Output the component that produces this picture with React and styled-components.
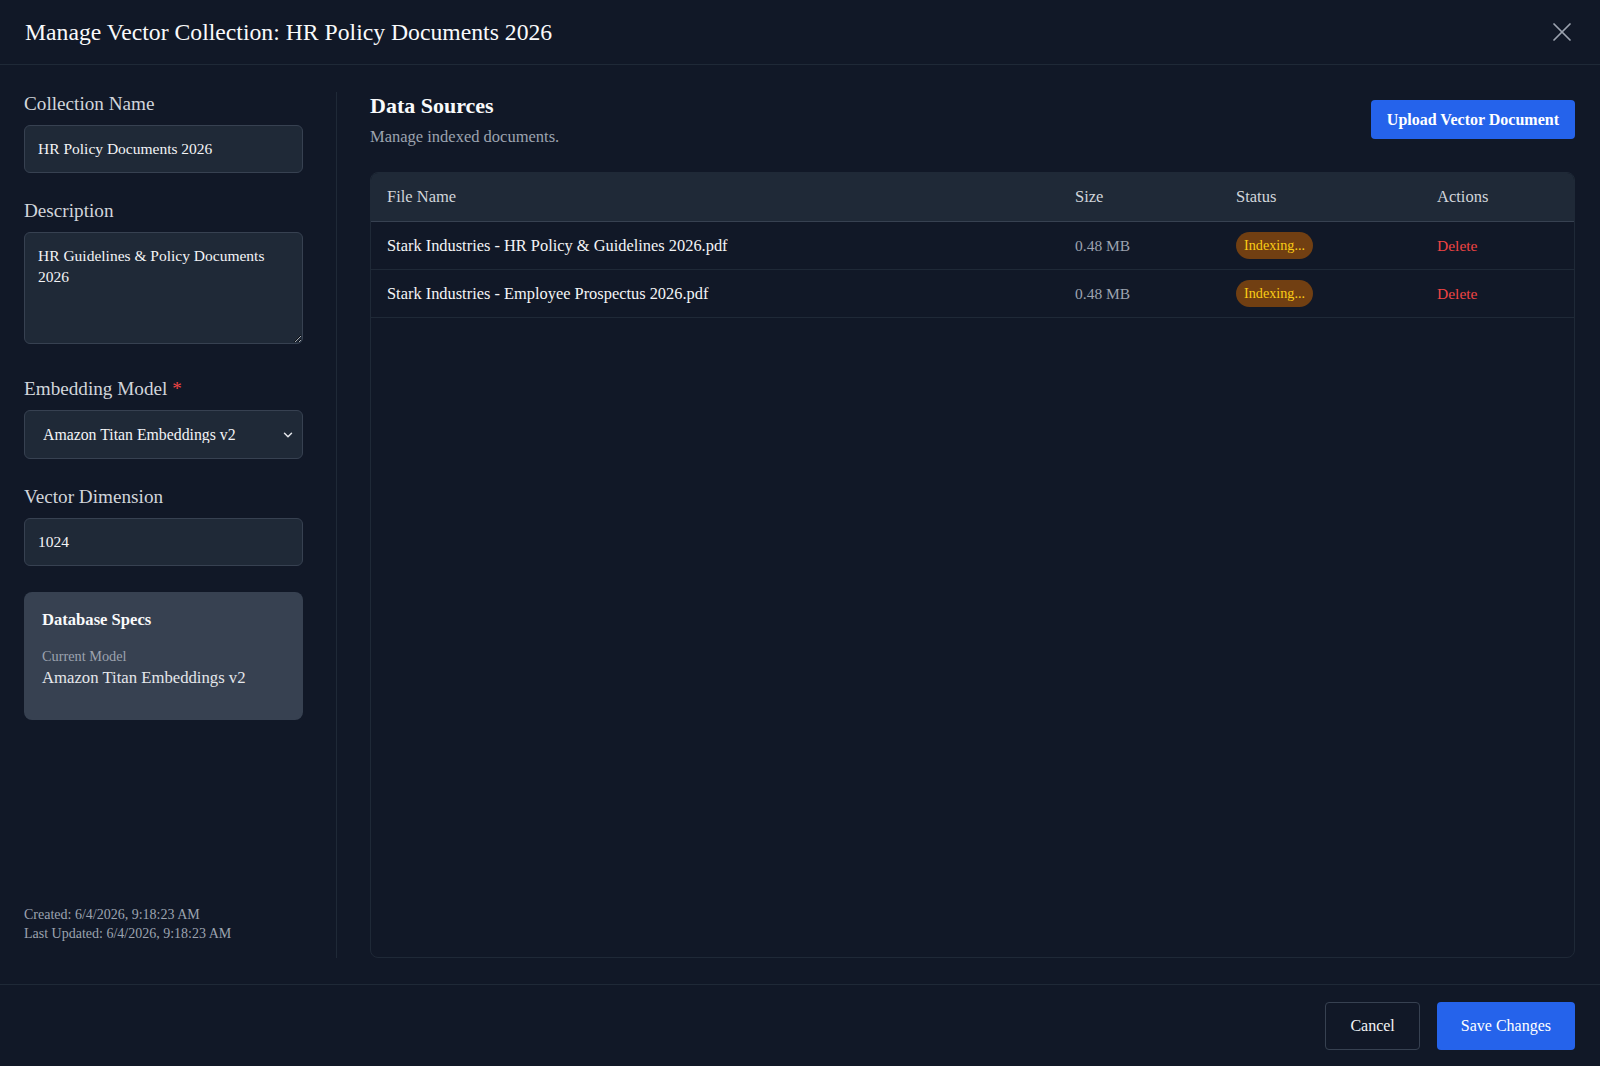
import React from "react";
import styled, { createGlobalStyle } from "styled-components";
import { X, ChevronDown } from "lucide-react";

const GlobalStyle = createGlobalStyle`
  * { box-sizing: border-box; }
  html, body { margin: 0; padding: 0; background: #111827; }
  body {
    font-family: "Liberation Serif", "Times New Roman", serif;
    color: #f3f4f6;
  }
`;

const files = [
  { name: "Stark Industries - HR Policy & Guidelines 2026.pdf", size: "0.48 MB", status: "Indexing..." },
  { name: "Stark Industries - Employee Prospectus 2026.pdf", size: "0.48 MB", status: "Indexing..." },
];

const App = () => {
  return (
    <>
      <GlobalStyle />
      <Modal>
        <Header>
          <Title>Manage Vector Collection: HR Policy Documents 2026</Title>
          <CloseButton aria-label="Close">
            <X size={32} strokeWidth={1.3} />
          </CloseButton>
        </Header>

        <Body>
          <Sidebar>
            <Field>
              <Label>Collection Name</Label>
              <Input defaultValue="HR Policy Documents 2026" />
            </Field>

            <Field $extra={7}>
              <Label>Description</Label>
              <TextArea defaultValue="HR Guidelines & Policy Documents 2026" />
            </Field>

            <Field>
              <Label>
                Embedding Model <Required>*</Required>
              </Label>
              <SelectWrap>
                <Select defaultValue="titan">
                  <option value="titan">Amazon Titan Embeddings v2</option>
                </Select>
                <SelectIcon>
                  <ChevronDown size={14} strokeWidth={2.5} />
                </SelectIcon>
              </SelectWrap>
            </Field>

            <Field>
              <Label>Vector Dimension</Label>
              <Input defaultValue="1024" />
            </Field>

            <SpecCard>
              <SpecTitle>Database Specs</SpecTitle>
              <SpecLabel>Current Model</SpecLabel>
              <SpecValue>Amazon Titan Embeddings v2</SpecValue>
            </SpecCard>

            <Timestamps>
              <div>Created: 6/4/2026, 9:18:23 AM</div>
              <div>Last Updated: 6/4/2026, 9:18:23 AM</div>
            </Timestamps>
          </Sidebar>

          <Main>
            <MainHeader>
              <div>
                <SectionTitle>Data Sources</SectionTitle>
                <SectionSub>Manage indexed documents.</SectionSub>
              </div>
              <PrimaryButton $small>Upload Vector Document</PrimaryButton>
            </MainHeader>

            <Table>
              <HeadRow>
                <HeadCell>File Name</HeadCell>
                <HeadCell>Size</HeadCell>
                <HeadCell>Status</HeadCell>
                <HeadCell>Actions</HeadCell>
              </HeadRow>
              {files.map((file) => (
                <Row key={file.name}>
                  <Cell>{file.name}</Cell>
                  <Cell $muted>{file.size}</Cell>
                  <Cell>
                    <Badge>{file.status}</Badge>
                  </Cell>
                  <Cell>
                    <DeleteLink>Delete</DeleteLink>
                  </Cell>
                </Row>
              ))}
            </Table>
          </Main>
        </Body>

        <Footer>
          <SecondaryButton>Cancel</SecondaryButton>
          <PrimaryButton>Save Changes</PrimaryButton>
        </Footer>
      </Modal>
    </>
  );
};

const Modal = styled.div`
  height: 100vh;
  display: flex;
  flex-direction: column;
  background: #111827;
`;

const Header = styled.header`
  height: 65px;
  flex-shrink: 0;
  display: flex;
  align-items: center;
  justify-content: space-between;
  padding: 0 22px 0 25px;
  border-bottom: 1px solid #1f2937;
`;

const Title = styled.h1`
  margin: 0;
  font-size: 23.7px;
  font-weight: 400;
  color: #f9fafb;
`;

const CloseButton = styled.button`
  display: flex;
  padding: 0;
  border: none;
  background: none;
  color: #9ca3af;
  cursor: pointer;
`;

const Body = styled.div`
  flex: 1;
  min-height: 0;
  display: flex;
  padding: 27px 25px 26px 24px;
`;

const Sidebar = styled.aside`
  width: 313px;
  flex-shrink: 0;
  display: flex;
  flex-direction: column;
  padding-right: 33px;
  border-right: 1px solid #1f2937;
`;

const Field = styled.div`
  margin-bottom: ${(p) => 26 + (p.$extra || 0)}px;
`;

const Label = styled.label`
  display: block;
  font-size: 19.2px;
  line-height: 24px;
  margin-bottom: 9px;
  color: #d1d5db;
`;

const Required = styled.span`
  color: #ef4444;
`;

const controlBase = `
  display: block;
  width: 100%;
  background: #1f2937;
  border: 1px solid #374151;
  border-radius: 6px;
  color: #f3f4f6;
  font-family: "Liberation Serif", "Times New Roman", serif;
  font-size: 15.5px;
  outline: none;
`;

const Input = styled.input`
  ${controlBase}
  height: 48px;
  padding: 0 13px;
`;

const TextArea = styled.textarea`
  ${controlBase}
  height: 112px;
  padding: 12px 13px;
  line-height: 21px;
  resize: vertical;
`;

const SelectWrap = styled.div`
  position: relative;
`;

const Select = styled.select`
  ${controlBase}
  height: 49px;
  padding: 0 30px 0 18px;
  font-size: 15.8px;
  appearance: none;
`;

const SelectIcon = styled.span`
  position: absolute;
  right: 8px;
  top: 50%;
  transform: translateY(-50%);
  display: flex;
  color: #e5e7eb;
  pointer-events: none;
`;

const SpecCard = styled.div`
  background: #374151;
  border-radius: 8px;
  height: 128px;
  padding: 16px 18px;
`;

const SpecTitle = styled.div`
  font-size: 16.6px;
  line-height: 24px;
  font-weight: 700;
  color: #f9fafb;
`;

const SpecLabel = styled.div`
  margin-top: 14px;
  font-size: 14.3px;
  line-height: 20px;
  color: #9ca3af;
`;

const SpecValue = styled.div`
  font-size: 16.7px;
  line-height: 24px;
  color: #e5e7eb;
`;

const Timestamps = styled.div`
  margin-top: auto;
  padding-bottom: 15px;
  font-size: 14px;
  line-height: 19px;
  color: #9ca3af;
`;

const Main = styled.main`
  flex: 1;
  min-width: 0;
  display: flex;
  flex-direction: column;
  padding-left: 33px;
`;

const MainHeader = styled.div`
  display: flex;
  justify-content: space-between;
  align-items: flex-start;
  margin-bottom: 24px;
`;

const SectionTitle = styled.h2`
  margin: 0;
  font-size: 22px;
  line-height: 28px;
  font-weight: 700;
  color: #f9fafb;
`;

const SectionSub = styled.p`
  margin: 6px 0 0;
  font-size: 16.5px;
  line-height: 22px;
  color: #9ca3af;
`;

const PrimaryButton = styled.button`
  height: ${(p) => (p.$small ? "39px" : "48px")};
  margin-top: ${(p) => (p.$small ? "8px" : "0")};
  padding: 0 ${(p) => (p.$small ? "16px" : "24px")};
  background: #2563eb;
  color: #ffffff;
  border: none;
  border-radius: 4px;
  font-family: inherit;
  font-size: 16px;
  font-weight: ${(p) => (p.$small ? 700 : 400)};
  cursor: pointer;
`;

const SecondaryButton = styled.button`
  height: 48px;
  padding: 0 24px;
  background: transparent;
  color: #f3f4f6;
  border: 1px solid #374151;
  border-radius: 4px;
  font-family: inherit;
  font-size: 16px;
  cursor: pointer;
`;

const Table = styled.div`
  flex: 1;
  border: 1px solid #1f2937;
  border-radius: 8px;
  overflow: hidden;
`;

const columns = "1fr 161px 201px 153px";

const HeadRow = styled.div`
  display: grid;
  grid-template-columns: ${columns};
  height: 49px;
  align-items: center;
  background: #1f2937;
  border-bottom: 1px solid #374151;
`;

const HeadCell = styled.div`
  padding: 0 16px;
  font-size: 16.5px;
  color: #d1d5db;
`;

const Row = styled.div`
  display: grid;
  grid-template-columns: ${columns};
  height: 48px;
  align-items: center;
  border-bottom: 1px solid #1f2937;
`;

const Cell = styled.div`
  padding: 0 16px;
  font-size: ${(p) => (p.$muted ? "15.5px" : "16.4px")};
  color: ${(p) => (p.$muted ? "#9ca3af" : "#f3f4f6")};
`;

const Badge = styled.span`
  display: inline-block;
  padding: 0 8px;
  height: 27px;
  line-height: 27px;
  border-radius: 999px;
  background: #713f12;
  color: #facc15;
  font-size: 14.2px;
`;

const DeleteLink = styled.button`
  padding: 0;
  border: none;
  background: none;
  color: #ef4444;
  font-family: inherit;
  font-size: 15.5px;
  cursor: pointer;
`;

const Footer = styled.footer`
  flex-shrink: 0;
  display: flex;
  justify-content: flex-end;
  gap: 17px;
  padding: 17px 25px 16px;
  border-top: 1px solid #1f2937;
`;

export default App;
